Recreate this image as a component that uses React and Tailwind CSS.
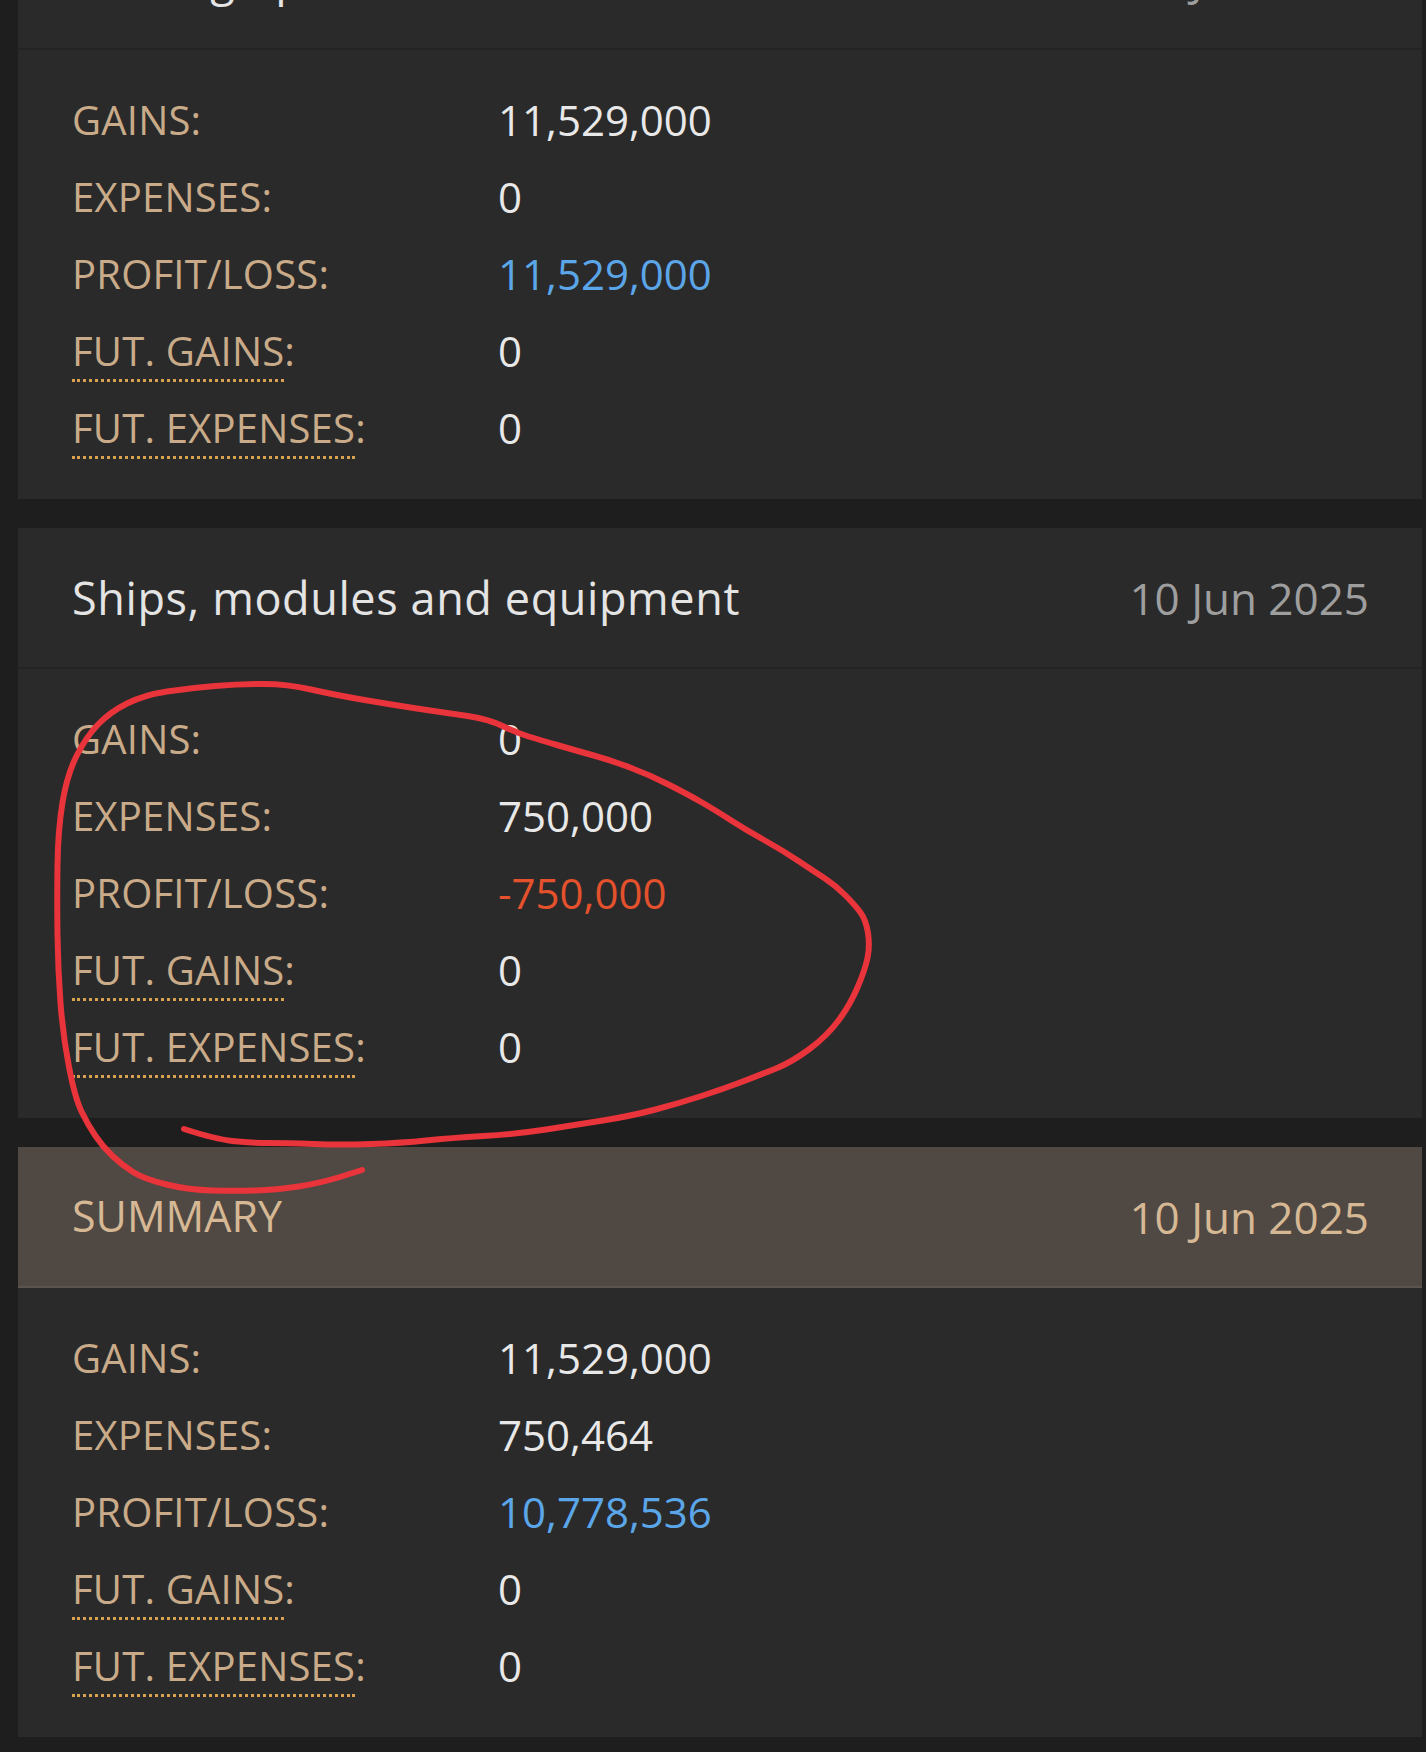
import { Fragment } from 'react'

const panels = [
    {
        title: 'Trading operations',
        date: '10 Jun 2025',
        rows: { gains: '11,529,000', expenses: '0', profit: '11,529,000', futGains: '0', futExpenses: '0' },
        tone: 'positive',
    },
    {
        title: 'Ships, modules and equipment',
        date: '10 Jun 2025',
        rows: { gains: '0', expenses: '750,000', profit: '-750,000', futGains: '0', futExpenses: '0' },
        tone: 'negative',
    },
    {
        title: 'SUMMARY',
        date: '10 Jun 2025',
        rows: { gains: '11,529,000', expenses: '750,464', profit: '10,778,536', futGains: '0', futExpenses: '0' },
        tone: 'positive',
        summary: true,
    },
]

// hand-drawn marker around the second panel
const circle = [
    [184, 1129], [215, 1139], [250, 1143], [287, 1143], [340, 1145], [402, 1143], [450, 1138],
    [517, 1134], [575, 1125], [631, 1116], [680, 1103], [723, 1089], [760, 1075], [792, 1062],
    [827, 1036], [850, 1005], [865, 970], [870, 946], [866, 920], [855, 905], [835, 885],
    [815, 872], [782, 850], [746, 830], [715, 810], [689, 795], [650, 775], [610, 760],
    [574, 750], [540, 740], [517, 733], [488, 719], [447, 713], [400, 706], [335, 695],
    [287, 684], [240, 684], [190, 688], [144, 695], [110, 712], [86, 737], [67, 775],
    [58, 830], [57, 900], [58, 970], [63, 1036], [75, 1098], [88, 1125], [103, 1147],
    [122, 1165], [144, 1179], [189, 1190], [235, 1191], [276, 1190], [321, 1183], [362, 1170],
]

const smooth = (pts) => {
    let d = `M${pts[0][0]} ${pts[0][1]}`
    for (let i = 1; i < pts.length - 1; i++) {
        const mx = (pts[i][0] + pts[i + 1][0]) / 2
        const my = (pts[i][1] + pts[i + 1][1]) / 2
        d += ` Q${pts[i][0]} ${pts[i][1]} ${mx} ${my}`
    }
    const last = pts[pts.length - 1]
    return d + ` L${last[0]} ${last[1]}`
}

const Label = ({ children, dotted }) => (
    <div className="text-[#c9ab89] tracking-[0.2px]">
        {dotted ? (
            <>
                <span className="border-b-[3px] border-dotted border-[#d9a24f] pb-[1px]">{children}</span>:
            </>
        ) : (
            <>{children}:</>
        )}
    </div>
)

const Panel = ({ title, date, rows, tone, summary, first }) => {
    const profitColor = tone === 'negative' ? 'text-[#e4512c]' : 'text-[#5ba6e8]'

    return (
        <section className={first ? '-mt-[91px] bg-[#2a2a2a]' : 'bg-[#2a2a2a]'}>
            <div
                className={
                    summary
                        ? 'flex h-[141px] items-center justify-between border-b-2 border-[#5b544e] bg-[#504943] pl-[54px] pr-[53px]'
                        : 'flex h-[141px] items-center justify-between border-b-2 border-[#242424] pl-[54px] pr-[53px]'
                }
            >
                <h2
                    className={
                        summary
                            ? 'text-[43px] text-[#d6b894]'
                            : 'text-[45px] text-[#e4e4e4] tracking-[0.6px]'
                    }
                >
                    {title}
                </h2>
                <span className={summary ? 'text-[44px] text-[#d6b894]' : 'text-[44px] text-[#9e9e9e]'}>{date}</span>
            </div>

            <div className="grid grid-cols-[426px_1fr] pl-[54px] pt-[31px] pb-[33px] text-[40px] leading-[77px]">
                <Label>GAINS</Label>
                <div className="text-[42px] text-[#e8e8e8]">{rows.gains}</div>
                <Label>EXPENSES</Label>
                <div className="text-[42px] text-[#e8e8e8]">{rows.expenses}</div>
                <Label>PROFIT/LOSS</Label>
                <div className={`text-[42px] ${profitColor}`}>{rows.profit}</div>
                <Label dotted>FUT. GAINS</Label>
                <div className="text-[42px] text-[#e8e8e8]">{rows.futGains}</div>
                <Label dotted>FUT. EXPENSES</Label>
                <div className="text-[42px] text-[#e8e8e8]">{rows.futExpenses}</div>
            </div>
        </section>
    )
}

export default function App() {
    return (
        <div className="relative h-[1752px] w-[1426px] overflow-hidden bg-[#1e1e1e] font-['Open_Sans',sans-serif]">
            <div className="flex flex-col gap-[29px] pl-[18px] pr-[4px]">
                {panels.map((p, i) => (
                    <Fragment key={p.title}>
                        <Panel {...p} first={i === 0} />
                    </Fragment>
                ))}
            </div>

            <svg
                className="pointer-events-none absolute left-0 top-0"
                width="1426"
                height="1752"
                viewBox="0 0 1426 1752"
            >
                <path
                    d={smooth(circle)}
                    fill="none"
                    stroke="#e8343a"
                    strokeWidth="6"
                    strokeLinecap="round"
                    strokeLinejoin="round"
                />
            </svg>
        </div>
    )
}
